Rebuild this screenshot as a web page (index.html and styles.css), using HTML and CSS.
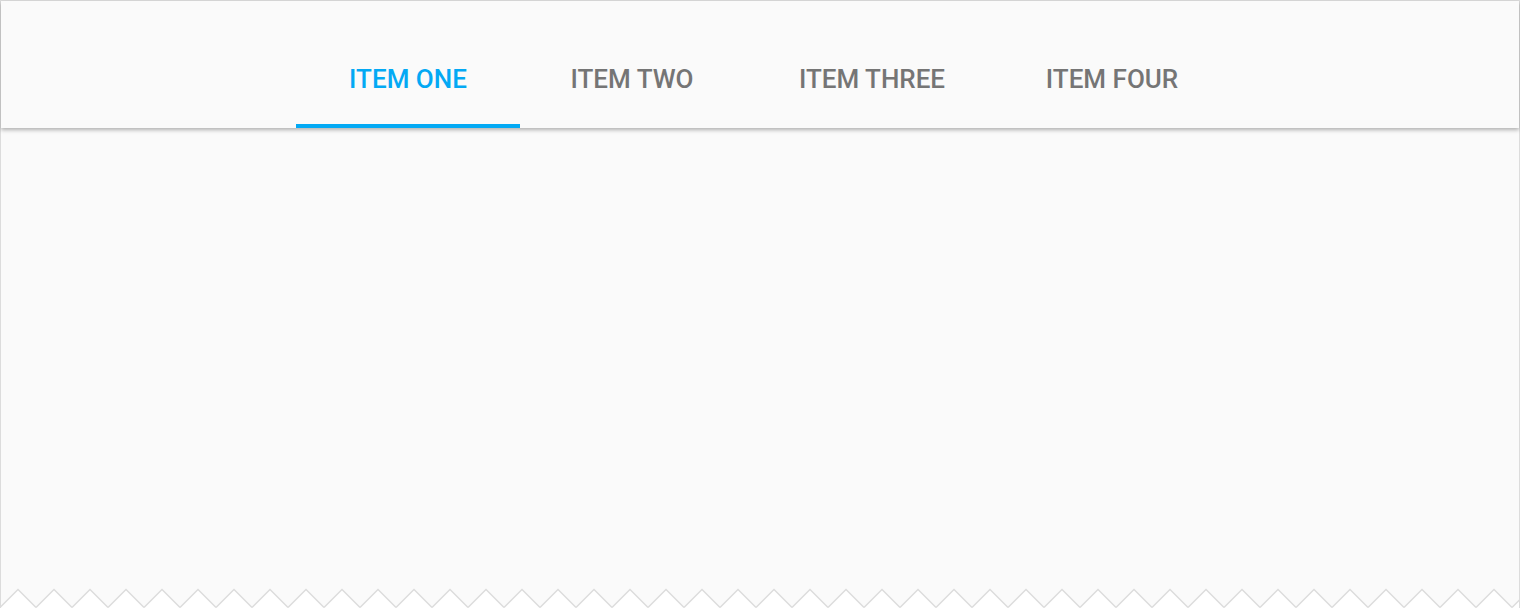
FILE: index.html
```html
<!DOCTYPE html>
<html lang="en">
<head>
<meta charset="utf-8">
<title>Tabs</title>
<link rel="stylesheet" href="styles.css">
</head>
<body>
<div class="frame">
  <header class="tabbar">
    <nav class="tabs">
      <div class="tab active">ITEM ONE</div>
      <div class="tab">ITEM TWO</div>
      <div class="tab tab-wide">ITEM THREE</div>
      <div class="tab">ITEM FOUR</div>
    </nav>
  </header>
  <main class="content"></main>
  <svg class="zigzag" width="1518" height="20" xmlns="http://www.w3.org/2000/svg">
    <defs>
      <pattern id="zz" x="-1" y="0" width="36" height="20" patternUnits="userSpaceOnUse">
        <rect x="0" y="0" width="36" height="20" fill="#fafafa"/>
        <polygon points="0,19.5 18,1.5 36,19.5 36,20 0,20" fill="#ffffff"/>
        <polyline points="0,19.5 18,1.5 36,19.5" fill="none" stroke="#dcdcdc" stroke-width="1.4"/>
      </pattern>
    </defs>
    <rect x="0" y="0" width="1518" height="20" fill="url(#zz)"/>
  </svg>
</div>
</body>
</html>
```
FILE: styles.css
```css
html, body {
  margin: 0;
  padding: 0;
  background: #ffffff;
}
body {
  width: 1520px;
  height: 608px;
  overflow: hidden;
  font-family: Roboto, "Noto Sans", "Liberation Sans", sans-serif;
}
.frame {
  box-sizing: border-box;
  width: 1520px;
  height: 608px;
  border: 1px solid #dcdcdc;
  border-bottom: none;
  background: #fafafa;
  display: flex;
  flex-direction: column;
}
.tabbar {
  position: relative;
  z-index: 1;
  height: 127px;
  flex: none;
  background: #fafafa;
  box-shadow: 0 2px 4px rgba(0, 0, 0, 0.3);
  display: flex;
  justify-content: center;
}
.tabs {
  display: flex;
  height: 127px;
}
.tab {
  box-sizing: border-box;
  height: 127px;
  width: 224px;
  padding-top: 63px;
  border-bottom: 4px solid transparent;
  font-size: 26px;
  line-height: 30px;
  font-weight: 500;
  color: #757575;
  text-align: center;
  white-space: nowrap;
}
.tab-wide {
  width: 256px;
}
.tab.active {
  color: #03a9f4;
  border-bottom-color: #03a9f4;
}
.content {
  flex: 1;
}
.zigzag {
  display: block;
  flex: none;
}
```
